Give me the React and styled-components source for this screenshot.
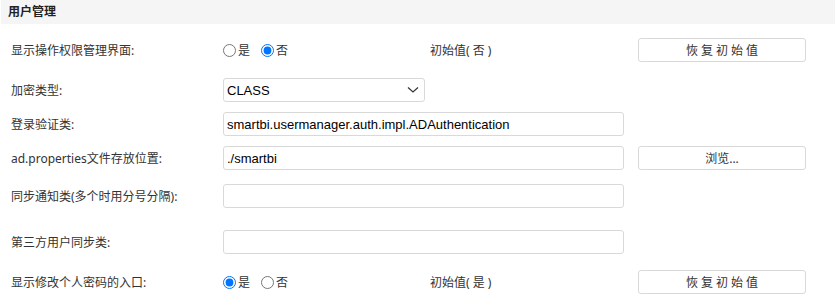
import React from 'react';
import styled, { createGlobalStyle } from 'styled-components';

const GlobalStyle = createGlobalStyle`
  body {
    margin: 0;
    background: #fff;
    font-family: "Noto Sans", "Noto Sans CJK SC", sans-serif;
    font-size: 12px;
    color: #333;
  }
`;

const Panel = styled.div`
  width: 835px;
  padding-bottom: 8px;
`;

const Header = styled.div`
  margin-left: 1px;
  height: 24px;
  line-height: 24px;
  padding-left: 7px;
  background: #f5f5f5;
  font-weight: bold;
  font-size: 12px;
  color: #222;
`;

const Row = styled.div`
  display: flex;
  align-items: center;
  height: 24px;
  margin-top: ${(p) => p.$top}px;
  padding-left: 11px;
`;

const Label = styled.div`
  width: 212px;
  flex-shrink: 0;
  color: #333;
  white-space: nowrap;
`;

const Control = styled.div`
  width: 401px;
  display: flex;
  align-items: center;
  flex-shrink: 0;
`;

const RadioGroup = styled.div`
  width: 207px;
  display: flex;
  align-items: center;
  gap: 11px;
`;

const RadioLabel = styled.label`
  display: flex;
  align-items: center;
  gap: 2px;
  color: #333;
`;

const Radio = styled.input.attrs({ type: 'radio' })`
  width: 13px;
  height: 13px;
  margin: 0;
  accent-color: #0075ff;
`;

const InitValue = styled.span`
  color: #333;
`;

const TextInput = styled.input`
  box-sizing: border-box;
  width: ${(p) => p.$w || 401}px;
  height: 24px;
  padding: 0 3px;
  border: 1px solid #d9d9d9;
  border-radius: 3px;
  font-family: "Liberation Sans", Arial, sans-serif;
  font-size: 13px;
  color: #000;
  outline: none;
`;

const Select = styled.div`
  box-sizing: border-box;
  width: 202px;
  height: 24px;
  padding: 0 5px 0 3px;
  display: flex;
  align-items: center;
  justify-content: space-between;
  border: 1px solid #d9d9d9;
  border-radius: 3px;
  font-family: "Liberation Sans", Arial, sans-serif;
  font-size: 13px;
  color: #000;
`;

const Button = styled.button`
  box-sizing: border-box;
  margin-left: 14px;
  width: 168px;
  height: 24px;
  padding: 0;
  background: #fff;
  border: 1px solid #d9d9d9;
  border-radius: 3px;
  font-family: "Noto Sans", "Noto Sans CJK SC", sans-serif;
  font-size: 12px;
  color: #333;
  letter-spacing: ${(p) => (p.$spaced ? '3px' : '0')};
  text-indent: ${(p) => (p.$spaced ? '3px' : '0')};
  cursor: pointer;
`;

const Chevron = () => (
  <svg width="12" height="8" viewBox="0 0 12 8">
    <path d="M1 1.5 L6 6 L11 1.5" fill="none" stroke="#333" strokeWidth="1.2" />
  </svg>
);

const YesNo = ({ name, value }) => (
  <RadioGroup>
    <RadioLabel>
      <Radio name={name} defaultChecked={value === 'yes'} />是
    </RadioLabel>
    <RadioLabel>
      <Radio name={name} defaultChecked={value === 'no'} />否
    </RadioLabel>
  </RadioGroup>
);

export default function App() {
  return (
    <>
      <GlobalStyle />
      <Panel>
        <Header>用户管理</Header>

        <Row $top={14}>
          <Label>显示操作权限管理界面:</Label>
          <Control>
            <YesNo name="showPerm" value="no" />
            <InitValue>初始值( 否 )</InitValue>
          </Control>
          <Button $spaced>恢复初始值</Button>
        </Row>

        <Row $top={16}>
          <Label>加密类型:</Label>
          <Select>
            <span>CLASS</span>
            <Chevron />
          </Select>
        </Row>

        <Row $top={10}>
          <Label>登录验证类:</Label>
          <TextInput defaultValue="smartbi.usermanager.auth.impl.ADAuthentication" />
        </Row>

        <Row $top={10}>
          <Label>ad.properties文件存放位置:</Label>
          <TextInput defaultValue="./smartbi" />
          <Button>浏览...</Button>
        </Row>

        <Row $top={14}>
          <Label>同步通知类(多个时用分号分隔):</Label>
          <TextInput defaultValue="" />
        </Row>

        <Row $top={22}>
          <Label>第三方用户同步类:</Label>
          <TextInput defaultValue="" />
        </Row>

        <Row $top={16}>
          <Label>显示修改个人密码的入口:</Label>
          <Control>
            <YesNo name="showPwd" value="yes" />
            <InitValue>初始值( 是 )</InitValue>
          </Control>
          <Button $spaced>恢复初始值</Button>
        </Row>
      </Panel>
    </>
  );
}
